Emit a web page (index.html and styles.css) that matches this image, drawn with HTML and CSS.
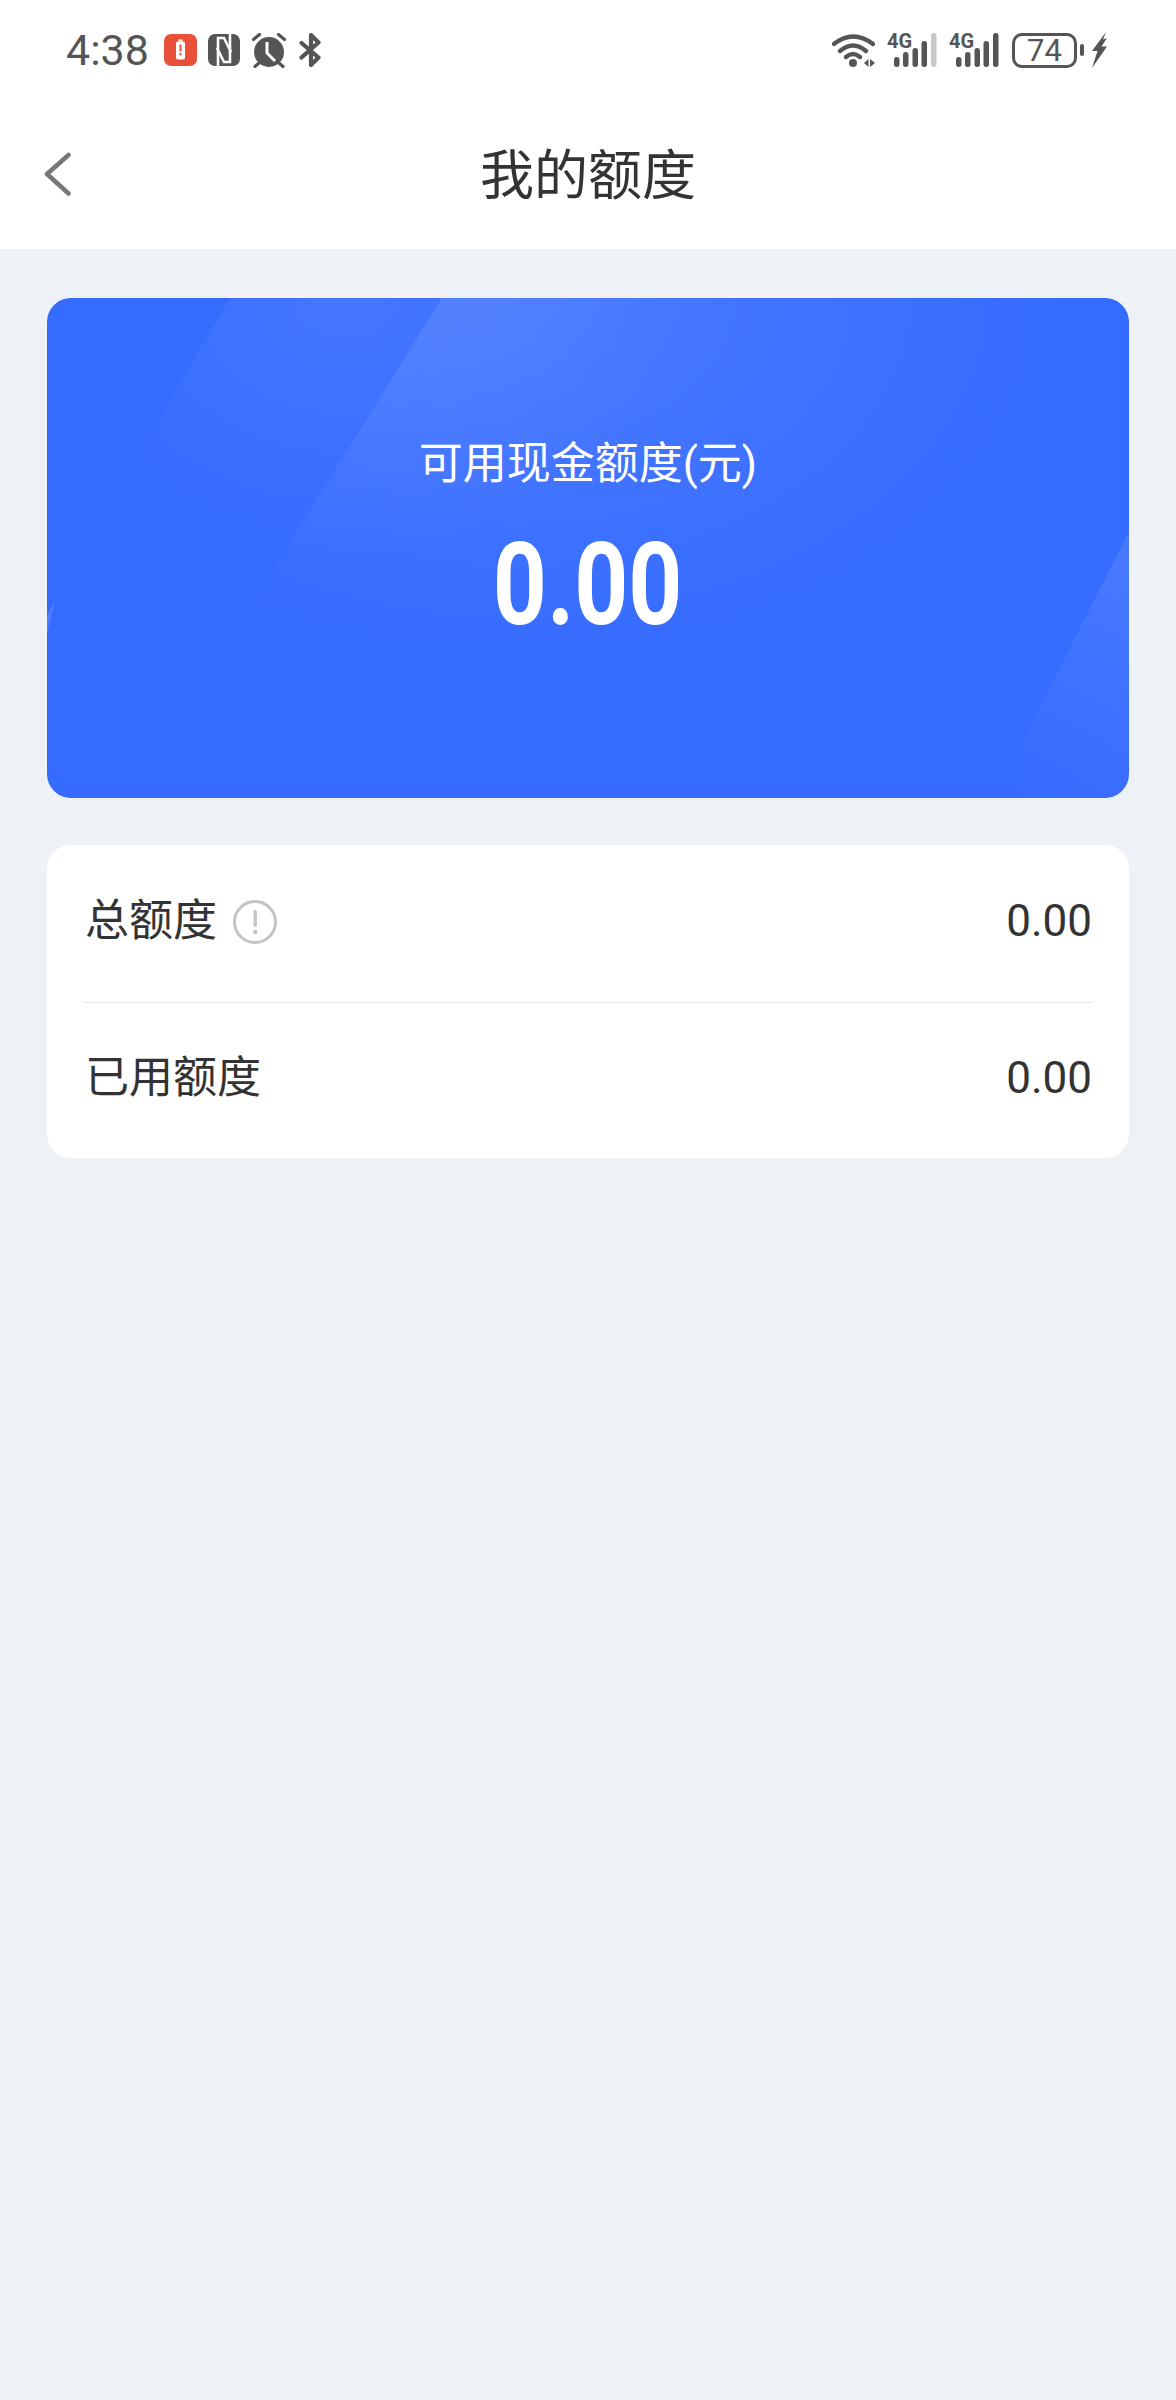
FILE: index.html
```html
<!DOCTYPE html>
<html lang="zh-CN">
<head>
    <meta charset="UTF-8">
    <meta name="viewport" content="width=device-width, initial-scale=1.0">
    <title>我的额度</title>
    <link rel="stylesheet" href="styles.css">
</head>
<body>
    <div class="page">
        <header class="top">
            <div class="status-bar">
                <div class="status-left">
                    <span class="time">4:38</span>
                    <svg class="ic-saver" viewBox="0 0 33 32">
                        <rect width="33" height="32" rx="7" fill="#e8503a"/>
                        <rect x="12" y="7.500" width="9" height="18" rx="2" fill="#fff"/>
                        <rect x="14.500" y="5.500" width="4" height="2" fill="#fff"/>
                        <rect x="15.500" y="10.500" width="2" height="7" fill="#e8503a"/>
                        <rect x="15.500" y="19" width="2" height="2.500" fill="#e8503a"/>
                    </svg>
                    <svg class="ic-nfc" viewBox="0 0 32 32">
                        <rect width="32" height="32" rx="7" fill="#555"/>
                        <g fill="none" stroke="#fff" stroke-width="2.600">
                            <path d="M10 32V4h6l7 14"/>
                            <path d="M22 0v28h-6l-7-14"/>
                        </g>
                    </svg>
                    <svg class="ic-alarm" viewBox="0 0 36 35">
                        <circle cx="18" cy="19" r="15" fill="#555"/>
                        <path d="M16 9v11l8 8" fill="none" stroke="#fff" stroke-width="3"/>
                        <path d="M2.500 6.500l6-5M33.500 6.500l-6-5M8 30l-4 3.500M28 30l4 3.500" fill="none" stroke="#555" stroke-width="3.200" stroke-linecap="round"/>
                    </svg>
                    <svg class="ic-bt" viewBox="0 0 22 34">
                        <path d="M2.500 10l17 14.500-7.500 7.500V2l7.500 7.500-17 15" fill="none" stroke="#555" stroke-width="4.200" stroke-linejoin="round" stroke-linecap="round"/>
                    </svg>
                </div>
                <div class="status-right">
                    <svg class="ic-wifi" viewBox="0 0 43 33">
                        <g fill="none" stroke="#555" stroke-width="4.400" stroke-linecap="round">
                            <path d="M2 10Q21 -5 41 10"/>
                            <path d="M8 17Q21 6 34 17"/>
                            <path d="M14 23Q21 17 28 23"/>
                        </g>
                        <circle cx="21" cy="29" r="4" fill="#555"/>
                        <path d="M32 29l4.500-4v8zM38 25l5 4-5 4z" fill="#555"/>
                    </svg>
                    <svg class="ic-signal" viewBox="0 0 50 34">
                        <text class="net" x="0" y="15">4G</text>
                        <rect x="7" y="24" width="5.500" height="10" rx="2.700" fill="#555"/>
                        <rect x="16" y="19" width="5.500" height="15" rx="2.700" fill="#555"/>
                        <rect x="25.500" y="15" width="5.500" height="19" rx="2.700" fill="#555"/>
                        <rect x="34.500" y="8" width="5.500" height="26" rx="2.700" fill="#555"/>
                        <rect x="44" y="0" width="5.500" height="34" rx="2.700" fill="#c9c9c9"/>
                    </svg>
                    <svg class="ic-signal" viewBox="0 0 50 34">
                        <text class="net" x="0" y="15">4G</text>
                        <rect x="7" y="24" width="5.500" height="10" rx="2.700" fill="#555"/>
                        <rect x="16" y="19" width="5.500" height="15" rx="2.700" fill="#555"/>
                        <rect x="25.500" y="15" width="5.500" height="19" rx="2.700" fill="#555"/>
                        <rect x="34.500" y="8" width="5.500" height="26" rx="2.700" fill="#555"/>
                        <rect x="44" y="0" width="5.500" height="34" rx="2.700" fill="#555"/>
                    </svg>
                    <div class="battery"><span class="battery-num">74</span></div>
                    <span class="battery-nub"></span>
                    <svg class="ic-bolt" viewBox="0 0 15 36">
                        <path d="M14 0L0 19h5.500L0 36l15-21.500H9.500L15 6l-4 1.500z" fill="#555"/>
                    </svg>
                </div>
            </div>
            <nav class="nav-bar">
                <svg class="back" viewBox="0 0 27 44">
                    <path d="M24.500 3L3 22l21.500 19.500" fill="none" stroke="#777" stroke-width="4.500" stroke-linecap="round" stroke-linejoin="round"/>
                </svg>
                <h1 class="title">我的额度</h1>
            </nav>
        </header>

        <main class="content">
            <section class="quota-card">
                <!-- faint diagonal bands behind the text -->
                <svg class="card-bg" viewBox="0 0 1082 500" preserveAspectRatio="none">
                    <defs>
                        <radialGradient id="bandA" gradientUnits="userSpaceOnUse" cx="0" cy="0" r="330" gradientTransform="translate(300 0) scale(1 .8)">
                            <stop offset="0" stop-color="#fff" stop-opacity=".08"/>
                            <stop offset="1" stop-color="#fff" stop-opacity="0"/>
                        </radialGradient>
                        <radialGradient id="bandB" gradientUnits="userSpaceOnUse" cx="0" cy="0" r="560" gradientTransform="translate(470 0) scale(1 .68)">
                            <stop offset="0" stop-color="#fff" stop-opacity=".11"/>
                            <stop offset="1" stop-color="#fff" stop-opacity="0"/>
                        </radialGradient>
                        <linearGradient id="bandC" gradientUnits="userSpaceOnUse" x1="1082" y1="270" x2="960" y2="500">
                            <stop offset="0" stop-color="#fff" stop-opacity=".09"/>
                            <stop offset="1" stop-color="#fff" stop-opacity="0"/>
                        </linearGradient>
                    </defs>
                    <polygon points="183,0 1082,0 1082,500 0,500 0,310" fill="url(#bandA)"/>
                    <polygon points="395,0 1082,0 1082,500 84,500" fill="url(#bandB)"/>
                    <polygon points="1082,234 1082,500 946,500" fill="url(#bandC)"/>
                    <polygon points="0,335 0,318 8,302" fill="#fff" fill-opacity=".14"/>
                </svg>
                <p class="quota-label">可用现金额度(元)</p>
                <p class="quota-value"><span class="quota-digits">0.00</span></p>
            </section>

            <section class="detail-card">
                <div class="detail-row">
                    <div class="detail-name">
                        <span>总额度</span>
                        <svg class="ic-info" viewBox="0 0 44 44">
                            <circle cx="22" cy="22" r="20.500" fill="none" stroke="#c4c4c4" stroke-width="3"/>
                            <rect x="20.500" y="10" width="3.400" height="17" rx="1.700" fill="#c4c4c4"/>
                            <circle cx="22.200" cy="32" r="2.200" fill="#c4c4c4"/>
                        </svg>
                    </div>
                    <span class="detail-num">0.00</span>
                </div>
                <div class="detail-row">
                    <div class="detail-name"><span>已用额度</span></div>
                    <span class="detail-num">0.00</span>
                </div>
            </section>
        </main>
    </div>
</body>
</html>
```

FILE: styles.css
```css
body {
    margin: 0;
    font-family: Roboto, "Noto Sans CJK SC", sans-serif;
    color: #333;
}

.page {
    min-height: 2400px;
    background-color: #eef2f7;
}

.top {
    background-color: #fff;
    height: 249px;
}

/* status bar */
.status-bar {
    height: 100px;
    padding: 0 69px 0 66px;
    display: flex;
    justify-content: space-between;
    align-items: center;
}

.status-left,
.status-right {
    display: flex;
    align-items: center;
}

.time {
    font-size: 43px;
    color: #555;
    margin-right: 15px;
}

.ic-saver { width: 33px; height: 32px; margin-right: 11px; }
.ic-nfc { width: 32px; height: 32px; margin-right: 11px; }
.ic-alarm { width: 36px; height: 35px; margin-right: 12px; }
.ic-bt { width: 22px; height: 34px; }
.ic-wifi { width: 43px; height: 33px; margin-right: 12px; }
.ic-signal { width: 50px; height: 34px; margin-right: 12px; overflow: visible; }
.ic-bolt { width: 15px; height: 36px; margin-left: 8px; }

.net {
    font-family: Roboto, sans-serif;
    font-size: 20px;
    font-weight: 700;
    fill: #555;
}

.battery {
    width: 65px;
    height: 35px;
    box-sizing: border-box;
    border: 3px solid #555;
    border-radius: 10px;
    margin-left: 1px;
    display: flex;
    align-items: center;
    justify-content: center;
}

.battery-num {
    font-size: 31px;
    line-height: 1;
    color: #555;
}

.battery-nub {
    width: 4px;
    height: 12px;
    border-radius: 2px;
    background-color: #555;
    margin-left: 3px;
}

/* nav */
.nav-bar {
    height: 149px;
    position: relative;
    display: flex;
    align-items: center;
    justify-content: center;
}

.back {
    position: absolute;
    left: 44px;
    top: 52px;
    width: 27px;
    height: 44px;
}

.title {
    margin: 0;
    padding-bottom: 7px;
    font-size: 54px;
    font-weight: 400;
    color: #333;
}

/* content */
.content {
    padding: 49px 47px 0;
}

.quota-card {
    position: relative;
    overflow: hidden;
    height: 500px;
    box-sizing: border-box;
    padding-top: 136px;
    border-radius: 24px;
    background-color: #356bff;
    color: #fff;
    text-align: center;
}

.card-bg {
    position: absolute;
    left: 0;
    top: 0;
    width: 100%;
    height: 100%;
}

.quota-label,
.quota-value {
    position: relative;
    margin: 0;
}

.quota-label {
    font-size: 44px;
    line-height: 60px;
}

.quota-value {
    margin-top: 31px;
    font-size: 115px;
    font-weight: 700;
    line-height: 120px;
}

/* no DIN here, so Roboto gets squeezed to the narrow digit width */
.quota-digits {
    display: inline-block;
    transform: scaleX(0.82);
}

.detail-card {
    margin-top: 47px;
    height: 313px;
    padding: 0 37px;
    border-radius: 24px;
    background-color: #fff;
}

.detail-row {
    height: 157px;
    box-sizing: border-box;
    display: flex;
    justify-content: space-between;
    align-items: center;
}

.detail-row + .detail-row {
    height: 156px;
    border-top: 1px solid #e6e6e6;
}

.detail-name {
    display: flex;
    align-items: center;
    font-size: 44px;
    padding-left: 1px;
}

.detail-name span {
    padding-bottom: 13px;
}

.ic-info {
    width: 44px;
    height: 44px;
    margin-left: 16px;
    margin-bottom: 4px;
}

.detail-num {
    font-size: 44px;
    padding-bottom: 5px;
}
```
